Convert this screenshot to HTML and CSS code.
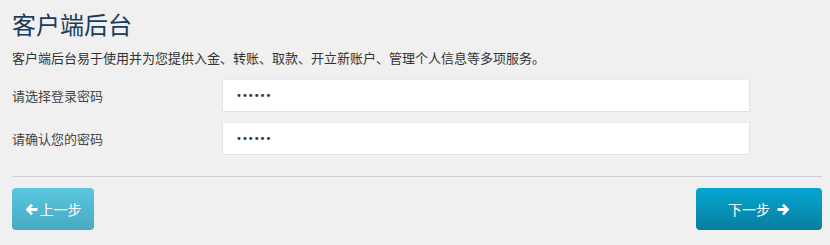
FILE: index.html
```html
<!DOCTYPE html>
<html lang="zh-CN">
<head>
<meta charset="utf-8">
<link rel="stylesheet" href="styles.css">
</head>
<body>
<div class="page">
  <h1 class="title">客户端后台</h1>
  <p class="desc">客户端后台易于使用并为您提供入金、转账、取款、开立新账户、管理个人信息等多项服务。</p>
  <div class="form">
    <div class="row">
      <label class="label">请选择登录密码</label>
      <div class="input"><span class="dots">••••••</span></div>
    </div>
    <div class="row">
      <label class="label">请确认您的密码</label>
      <div class="input"><span class="dots">••••••</span></div>
    </div>
  </div>
  <hr class="divider">
  <div class="actions">
    <button class="btn btn-prev"><svg class="ico" viewBox="0 0 14 14" width="13" height="13"><path d="M6.6 0.8 L0.6 7 L6.6 13.2 L8.6 11.2 L6.2 8.7 H13.4 V5.3 H6.2 L8.6 2.8 Z" fill="#fff"/></svg>上一步</button>
    <button class="btn btn-next">下一步<svg class="ico" viewBox="0 0 14 14" width="13" height="13"><path d="M7.4 0.8 L13.4 7 L7.4 13.2 L5.4 11.2 L7.8 8.7 H0.6 V5.3 H7.8 L5.4 2.8 Z" fill="#fff"/></svg></button>
  </div>
</div>
</body>
</html>
```
FILE: styles.css
```css
html, body {
  margin: 0;
  padding: 0;
  background: #f0f0f0;
}
body {
  font-family: "Noto Sans CJK SC", "Liberation Sans", sans-serif;
  color: #333;
}
.page {
  padding: 0 8px 0 12px;
}
.title {
  margin: 0;
  padding-top: 9px;
  font-size: 24px;
  font-weight: normal;
  line-height: 30px;
  color: #1b3a5c;
}
.desc {
  margin: 9px 0 0;
  font-size: 13px;
  line-height: 19px;
  color: #333;
}
.form {
  margin-top: 12px;
  display: flex;
  flex-direction: column;
  gap: 10px;
}
.row {
  display: flex;
  align-items: center;
}
.label {
  width: 210px;
  font-size: 13px;
  color: #444;
}
.input {
  width: 513px;
  height: 31px;
  background: #fff;
  border: 1px solid #e2e2e2;
  border-top-color: #ebebeb;
  display: flex;
  align-items: center;
  padding-left: 13px;
  box-sizing: content-box;
}
.dots {
  font-family: "DejaVu Sans", sans-serif;
  font-size: 10px;
  color: #333;
}
.divider {
  margin: 21px 0 0;
  border: 0;
  border-top: 1px solid #cfcfd4;
  height: 0;
}
.actions {
  margin-top: 11px;
  display: flex;
  justify-content: space-between;
}
.btn {
  height: 42px;
  border: 0;
  border-radius: 4px;
  color: #fff;
  font-family: "Noto Sans CJK SC", sans-serif;
  font-size: 14px;
  display: flex;
  align-items: center;
  justify-content: center;
  gap: 2px;
  padding: 0;
}
.btn-prev {
  width: 82px;
  background: linear-gradient(#5ac6df, #48a9c2);
}
.btn-next {
  width: 126px;
  background: linear-gradient(#06a6d3, #077e9f);
  gap: 7px;
}
.ico {
  display: block;
}
```
